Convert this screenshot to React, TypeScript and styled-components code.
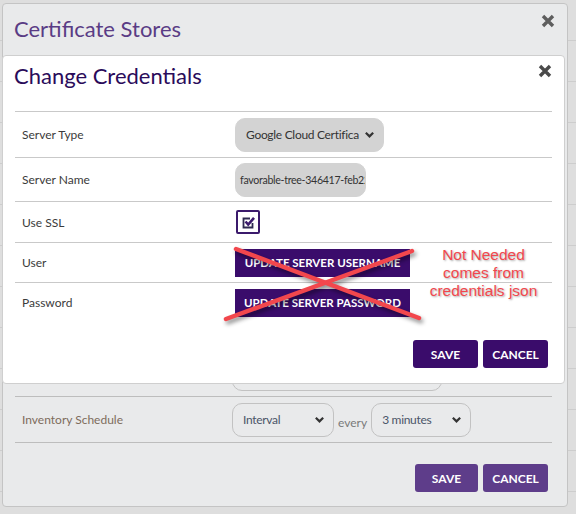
import * as React from 'react';
import styled, { createGlobalStyle } from 'styled-components';

const colors = {
  purple: '#3a0c6b',
  purpleDim: '#5e3d8a',
  titleDim: '#5a3c85',
  title: '#2a0b5a',
  text: '#3b3b3b',
  textDim: '#7e6c5c',
  line: '#c9c9c9',
  lineDim: '#bdbdbd',
  modalDim: '#e9eaeb',
  page: '#dedede',
  disabled: '#d3d3d3',
  red: '#f2474d',
};

const GlobalStyle = createGlobalStyle`
  html, body {
    margin: 0;
    padding: 0;
  }
  body {
    font-family: Lato, 'Open Sans', sans-serif;
    background: ${colors.page};
  }
`;

const Page = styled.div`
  position: relative;
  width: 576px;
  height: 514px;
  overflow: hidden;
  box-sizing: border-box;
  padding: 3px 8px 0 2px;
  background-color: ${colors.page};
  background-image: repeating-linear-gradient(
    to bottom,
    transparent 0px,
    transparent 40px,
    #cdcdcd 40px,
    #cdcdcd 41px
  );
`;

const OuterModal = styled.div`
  box-sizing: border-box;
  width: 566px;
  height: 504px;
  display: flex;
  flex-direction: column;
  background: ${colors.modalDim};
  border: 1px solid #c4c4c4;
  border-radius: 4px;
`;

const Header = styled.div<{ $height: number; $top: number }>`
  height: ${p => p.$height}px;
  flex-shrink: 0;
  display: flex;
  align-items: flex-start;
  justify-content: space-between;
  padding: ${p => p.$top}px 11px 0 11px;
  box-sizing: border-box;
`;

const Title = styled.h2<{ $dim?: boolean }>`
  margin: 0;
  font-size: 22px;
  line-height: 26px;
  font-weight: 400;
  color: ${p => (p.$dim ? colors.titleDim : colors.title)};
`;

const CloseButton = styled.button<{ $dim?: boolean; $offset: number }>`
  border: 0;
  background: none;
  padding: 0;
  margin-top: ${p => p.$offset}px;
  width: 16px;
  height: 16px;
  display: flex;
  align-items: center;
  justify-content: center;
  color: ${p => (p.$dim ? '#5e5e5e' : '#4a4a4a')};
  cursor: pointer;
`;

const OuterBody = styled.div`
  flex: 1;
  display: flex;
  flex-direction: column;
  justify-content: flex-end;
  overflow: hidden;
  padding: 0 15px 0 12px;
`;

const Row = styled.div<{ $height: number; $dim?: boolean; $valueX: number }>`
  display: grid;
  grid-template-columns: ${p => p.$valueX}px 1fr;
  align-items: center;
  min-height: ${p => p.$height}px;
  box-sizing: border-box;
  border-top: 1px solid ${p => (p.$dim ? colors.lineDim : colors.line)};
`;

const Label = styled.div<{ $dim?: boolean }>`
  padding-left: 7px;
  font-size: 12px;
  color: ${p => (p.$dim ? colors.textDim : colors.text)};
`;

const Value = styled.div`
  display: flex;
  align-items: center;
  gap: 4px;
`;

const fieldText = `
  font-family: Lato, 'Open Sans', sans-serif;
  letter-spacing: -0.3px;
  white-space: nowrap;
  overflow: hidden;
`;

const SelectBox = styled.div<{ $width: number; $disabled?: boolean }>`
  box-sizing: border-box;
  width: ${p => p.$width}px;
  height: 34px;
  display: flex;
  align-items: center;
  justify-content: space-between;
  gap: 4px;
  padding: 0 8px 0 10px;
  border-radius: 10px;
  border: 1px solid ${p => (p.$disabled ? colors.disabled : '#c2c2c2')};
  background: ${p => (p.$disabled ? colors.disabled : colors.modalDim)};
  color: ${p => (p.$disabled ? '#333' : '#4b5568')};
  font-size: 12px;
  ${fieldText}
`;

const SelectText = styled.span`
  overflow: hidden;
  flex: 1;
`;

const TextInput = styled.div<{ $width: number; $disabled?: boolean; $fontSize?: number }>`
  box-sizing: border-box;
  width: ${p => p.$width}px;
  height: 34px;
  display: flex;
  align-items: center;
  padding: 0 3px 0 4px;
  border-radius: 10px;
  border: 1px solid ${p => (p.$disabled ? colors.disabled : '#c2c2c2')};
  background: ${p => (p.$disabled ? colors.disabled : colors.modalDim)};
  color: #333;
  font-size: ${p => p.$fontSize ?? 12}px;
  ${fieldText}
`;

const Every = styled.span`
  font-size: 12px;
  color: #7a7a7a;
  align-self: flex-end;
  margin-bottom: 7px;
`;

const CheckBox = styled.div`
  box-sizing: border-box;
  width: 24px;
  height: 24px;
  margin-left: 1px;
  border: 2px solid #3b1a6c;
  border-radius: 2px;
  background: #fff;
  display: flex;
  align-items: center;
  justify-content: center;
`;

const WideButton = styled.button`
  width: 175px;
  height: 28px;
  border: 0;
  border-radius: 0;
  background: ${colors.purple};
  color: #fff;
  font-family: Lato, sans-serif;
  font-weight: 700;
  font-size: 11.5px;
  padding: 0;
  cursor: pointer;
`;

const Footer = styled.div<{ $padding: string }>`
  display: flex;
  justify-content: flex-end;
  gap: 5px;
  padding: ${p => p.$padding};
`;

const ActionButton = styled.button<{ $dim?: boolean; $width: number }>`
  width: ${p => p.$width}px;
  height: 28px;
  border: 0;
  border-radius: 3px;
  background: ${p => (p.$dim ? colors.purpleDim : colors.purple)};
  color: #fff;
  font-family: Lato, sans-serif;
  font-weight: 700;
  font-size: 12px;
  padding: 0;
  cursor: pointer;
`;

const InnerModal = styled.div`
  position: absolute;
  top: 55px;
  left: 2px;
  width: 563px;
  height: 329px;
  box-sizing: border-box;
  background: #fff;
  border: 1px solid #cfcfcf;
  border-radius: 4px;
  display: flex;
  flex-direction: column;
`;

const Form = styled.div`
  padding: 0 12px 0 12px;
`;

const Annotation = styled.div`
  position: absolute;
  top: 190px;
  left: 218px;
  width: 340px;
  height: 80px;
  pointer-events: none;
`;

const AnnotationText = styled.div`
  position: absolute;
  left: 200px;
  top: 0;
  width: 125px;
  text-align: center;
  font-family: 'Liberation Sans', Arial, sans-serif;
  font-size: 15.5px;
  line-height: 18px;
  color: ${colors.red};
  text-shadow: 1px 1px 2px rgba(0, 0, 0, 0.35);
`;

function CloseIcon() {
  return (
    <svg width="14" height="14" viewBox="0 0 14 14">
      <path d="M2 2L12 12M12 2L2 12" stroke="currentColor" strokeWidth="3.4" strokeLinecap="butt" />
    </svg>
  );
}

function Chevron() {
  return (
    <svg width="11" height="11" viewBox="0 0 12 12" style={{ flexShrink: 0 }}>
      <path d="M2 4L6 8L10 4" stroke="#333" strokeWidth="2.4" fill="none" />
    </svg>
  );
}

function CheckIcon() {
  return (
    <svg width="15" height="15" viewBox="0 0 15 15">
      <path d="M11.5 8V12.5H2.5V3.5H9" stroke="#2e2a50" strokeWidth="1.8" fill="none" />
      <path d="M4.5 6.5L7.2 9.5L13 2.8" stroke="#3b1a6c" strokeWidth="2.6" fill="none" />
    </svg>
  );
}

export default function App() {
  return (
    <>
      <GlobalStyle />
      <Page>
        <OuterModal>
          <Header $height={49} $top={12}>
            <Title $dim>Certificate Stores</Title>
            <CloseButton $dim $offset={-3}><CloseIcon /></CloseButton>
          </Header>
          <OuterBody>
            <Row $height={46} $dim $valueX={217}>
              <Label $dim>Client Machine</Label>
              <Value><TextInput $width={210}>agent</TextInput></Value>
            </Row>
            <Row $height={46} $dim $valueX={217}>
              <Label $dim>Store Path</Label>
              <Value><TextInput $width={210}>favorable-tree</TextInput></Value>
            </Row>
            <Row $height={46} $dim $valueX={217}>
              <Label $dim>Password</Label>
              <Value><TextInput $width={210} /></Value>
            </Row>
            <Row $height={46} $dim $valueX={217}>
              <Label $dim>Inventory Schedule</Label>
              <Value>
                <SelectBox $width={102}>
                  <SelectText>Interval</SelectText>
                  <Chevron />
                </SelectBox>
                <Every>every</Every>
                <SelectBox $width={100}>
                  <SelectText>3 minutes</SelectText>
                  <Chevron />
                </SelectBox>
              </Value>
            </Row>
            <Row $height={0} $dim $valueX={217} />
            <Footer $padding="21px 4px 14px 0">
              <ActionButton $dim $width={63}>SAVE</ActionButton>
              <ActionButton $dim $width={65}>CANCEL</ActionButton>
            </Footer>
          </OuterBody>
        </OuterModal>

        <InnerModal>
          <Header $height={55} $top={7}>
            <Title>Change Credentials</Title>
            <CloseButton $offset={0}><CloseIcon /></CloseButton>
          </Header>
          <Form>
            <Row $height={46} $valueX={220}>
              <Label>Server Type</Label>
              <Value>
                <SelectBox $width={149} $disabled>
                  <SelectText>Google Cloud Certifica</SelectText>
                  <Chevron />
                </SelectBox>
              </Value>
            </Row>
            <Row $height={44} $valueX={220}>
              <Label>Server Name</Label>
              <Value>
                <TextInput $width={131} $disabled $fontSize={10.6}>favorable-tree-346417-feb22</TextInput>
              </Value>
            </Row>
            <Row $height={41} $valueX={220}>
              <Label>Use SSL</Label>
              <Value>
                <CheckBox><CheckIcon /></CheckBox>
              </Value>
            </Row>
            <Row $height={40} $valueX={220}>
              <Label>User</Label>
              <Value><WideButton>UPDATE SERVER USERNAME</WideButton></Value>
            </Row>
            <Row $height={40} $valueX={220}>
              <Label>Password</Label>
              <Value><WideButton>UPDATE SERVER PASSWORD</WideButton></Value>
            </Row>
          </Form>
          <Footer $padding="18px 16px 0 0">
            <ActionButton $width={65}>SAVE</ActionButton>
            <ActionButton $width={65}>CANCEL</ActionButton>
          </Footer>
          <Annotation>
            <svg width="210" height="80" viewBox="0 0 210 80" style={{ overflow: 'visible' }}>
              <g stroke={colors.red} strokeWidth="4.5" strokeLinecap="round" style={{ filter: 'drop-shadow(2px 3px 2px rgba(0,0,0,0.45))' }}>
                <path d="M15 3L198 72" />
                <path d="M191 5L5 73" />
              </g>
            </svg>
            <AnnotationText>
              Not Needed
              <br />
              comes from
              <br />
              credentials json
            </AnnotationText>
          </Annotation>
        </InnerModal>
      </Page>
    </>
  );
}
